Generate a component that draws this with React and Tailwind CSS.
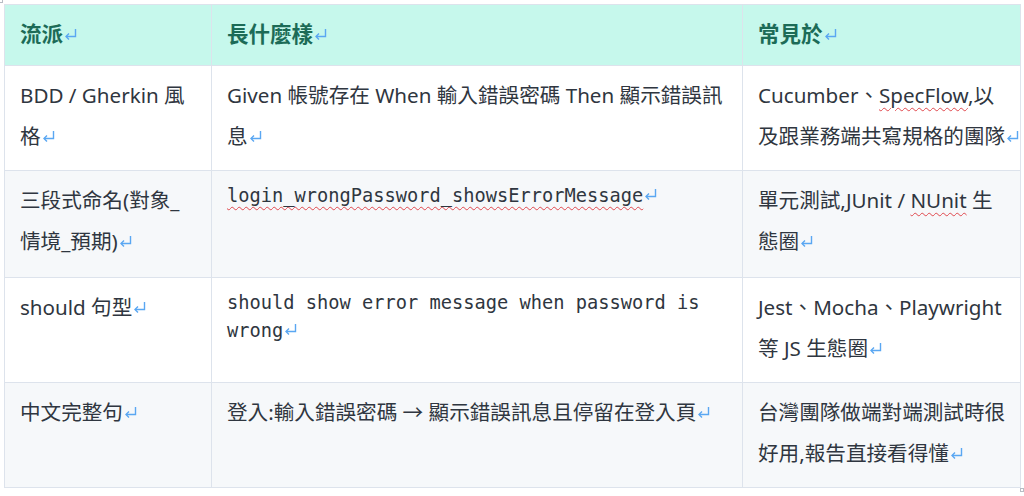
const Mark = () => (
  <svg width="13" height="12" viewBox="0 0 13 12" fill="none" stroke="#5aa7f2" strokeWidth="1.4" className="inline-block align-[2px] ml-[1px]">
    <path d="M11.5 1V8.5H2" />
    <path d="M5 5.5L2 8.5L5 11.5" />
  </svg>
);

const Squiggle = ({ children }) => (
  <span className="underline decoration-wavy decoration-[#e0484d] decoration-1 underline-offset-[4px]">{children}</span>
);

const rows = [
  {
    h: 'h-[105px]',
    bg: 'bg-white',
    a: <>BDD / Gherkin 風<br />格<Mark /></>,
    b: <>Given 帳號存在 When 輸入錯誤密碼 Then 顯示錯誤訊<br />息<Mark /></>,
    c: <>Cucumber、<Squiggle>SpecFlow</Squiggle>,以<br />及跟業務端共寫規格的團隊<Mark /></>,
  },
  {
    h: 'h-[107px]',
    bg: 'bg-[#f6f8fa]',
    a: <>三段式命名(對象_<br />情境_預期)<Mark /></>,
    mono: <><Squiggle>login_wrongPassword_showsErrorMessage</Squiggle><Mark /></>,
    c: <>單元測試,JUnit / <Squiggle>NUnit</Squiggle> 生<br />態圈<Mark /></>,
  },
  {
    h: 'h-[105px]',
    bg: 'bg-white',
    a: <>should 句型<Mark /></>,
    mono: <>should show error message when password is<br />wrong<Mark /></>,
    c: <>Jest、Mocha、Playwright<br />等 JS 生態圈<Mark /></>,
  },
  {
    h: 'h-[105px]',
    bg: 'bg-[#f6f8fa]',
    a: <>中文完整句<Mark /></>,
    b: <>登入:輸入錯誤密碼 → 顯示錯誤訊息且停留在登入頁<Mark /></>,
    c: <>台灣團隊做端對端測試時很<br />好用,報告直接看得懂<Mark /></>,
  },
];

const cell = 'border border-[#dde3ec] align-top px-[15px] pt-[9px] whitespace-nowrap overflow-hidden';

export default function App() {
  return (
    <div className="relative w-[1024px] h-[496px] bg-white overflow-hidden pl-[4px] pt-[4px] font-['Noto_Sans','Noto_Sans_CJK_TC',sans-serif] text-[20.6px] leading-[41px] text-[#2f3640]">
      <div className="absolute left-0 top-0 w-[3px] h-[3px] border-r border-b border-[#b8bcc4]" />
      <div className="flex">
        <table className="table-fixed border-collapse w-[1016px]">
          <colgroup>
            <col className="w-[207px]" />
            <col className="w-[531px]" />
            <col className="w-[278px]" />
          </colgroup>
          <thead>
            <tr className="h-[61px] bg-[#c6f8ec]">
              {['流派', '長什麼樣', '常見於'].map((t) => (
                <th key={t} className="border border-[#dde3ec] align-top text-left px-[15px] pt-[8px] font-bold text-[21.5px] text-[#1c6b57]">
                  {t}<Mark />
                </th>
              ))}
            </tr>
          </thead>
          <tbody>
            {rows.map((r, i) => (
              <tr key={i} className={`${r.h} ${r.bg}`}>
                <td className={cell}>{r.a}</td>
                <td className={cell}>
                  {r.mono ? (
                    <div className="pt-[2px] font-['DejaVu_Sans_Mono','Noto_Sans_CJK_TC',monospace] text-[18.7px] leading-[28px]">{r.mono}</div>
                  ) : (
                    r.b
                  )}
                </td>
                <td className={cell}>{r.c}</td>
              </tr>
            ))}
          </tbody>
        </table>
        <div className="w-[4px] flex flex-col overflow-hidden pl-[1px]">
          <div className="h-[61px] pt-[8px]"><Mark /></div>
          <div className="h-[105px] pt-[9px]"><Mark /></div>
          <div className="h-[107px] pt-[9px]"><Mark /></div>
          <div className="h-[105px] pt-[9px]"><Mark /></div>
          <div className="h-[105px] pt-[9px]"><Mark /></div>
        </div>
      </div>
      <div className="absolute left-[1020px] top-[488px] w-[4px] h-[4px] border border-[#b8bcc4] bg-white" />
    </div>
  );
}
